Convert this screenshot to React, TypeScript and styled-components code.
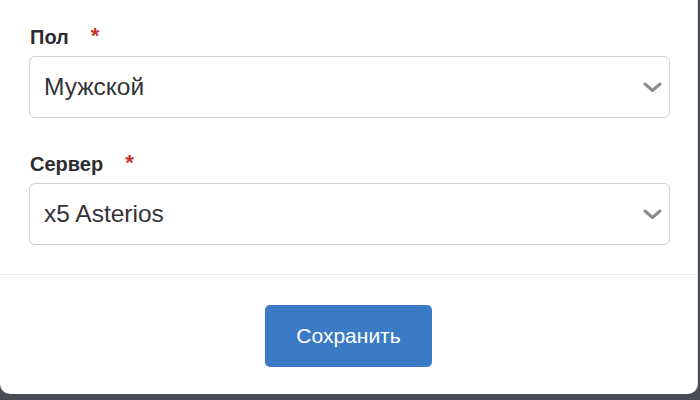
import React from "react";
import styled, { createGlobalStyle } from "styled-components";

const Global = createGlobalStyle`
  html, body {
    margin: 0;
    padding: 0;
    background: #4a4c55;
    font-family: "Liberation Sans", Arial, sans-serif;
  }
  * { box-sizing: border-box; }
`;

const Panel = styled.div`
  width: 698px;
  height: 394px;
  background: #ffffff;
  border-right: 1px solid #e4e4e8;
  border-radius: 0 0 10px 10px;
  display: flex;
  flex-direction: column;
`;

const Form = styled.div`
  padding: 25px 27px 29px 29px;
  display: flex;
  flex-direction: column;
  gap: 34px;
  border-bottom: 1px solid #e8e8ee;
`;

const Field = styled.div`
  display: flex;
  flex-direction: column;
  gap: 7px;
`;

const Label = styled.div`
  display: flex;
  align-items: flex-start;
  gap: 22px;
  height: 24px;
  line-height: 24px;
  padding-left: 1px;
  font-size: 20px;
  font-weight: 700;
  color: #2d2d30;
`;

const Required = styled.span`
  color: #c8302c;
  font-size: 22px;
  font-weight: 700;
  line-height: 22px;
`;

const Select = styled.div`
  height: 62px;
  border: 1px solid #cfcfd6;
  border-radius: 6px;
  display: flex;
  align-items: center;
  justify-content: space-between;
  padding: 0 7px 0 14px;
  font-size: 24.5px;
  color: #333338;
`;

const Footer = styled.div`
  flex: 1;
  display: flex;
  justify-content: center;
  padding-top: 30px;
`;

const Button = styled.button`
  width: 167px;
  height: 62px;
  border: none;
  border-radius: 5px;
  background: #3b7bc5;
  color: #ffffff;
  font-family: "Liberation Sans", Arial, sans-serif;
  font-size: 21px;
  cursor: pointer;
`;

const Chevron = () => (
  <svg width="19" height="11" viewBox="0 0 19 11" fill="none">
    <polyline
      points="2,2 9.5,8.5 17,2"
      stroke="#8c8c90"
      strokeWidth="3"
      strokeLinecap="round"
      strokeLinejoin="round"
    />
  </svg>
);

const SelectField = ({ label, value }: { label: string; value: string }) => (
  <Field>
    <Label>
      <span>{label}</span>
      <Required>*</Required>
    </Label>
    <Select>
      <span>{value}</span>
      <Chevron />
    </Select>
  </Field>
);

export default function App() {
  return (
    <>
      <Global />
      <Panel>
        <Form>
          <SelectField label="Пол" value="Мужской" />
          <SelectField label="Сервер" value="x5 Asterios" />
        </Form>
        <Footer>
          <div>
            <Button>Сохранить</Button>
          </div>
        </Footer>
      </Panel>
    </>
  );
}
